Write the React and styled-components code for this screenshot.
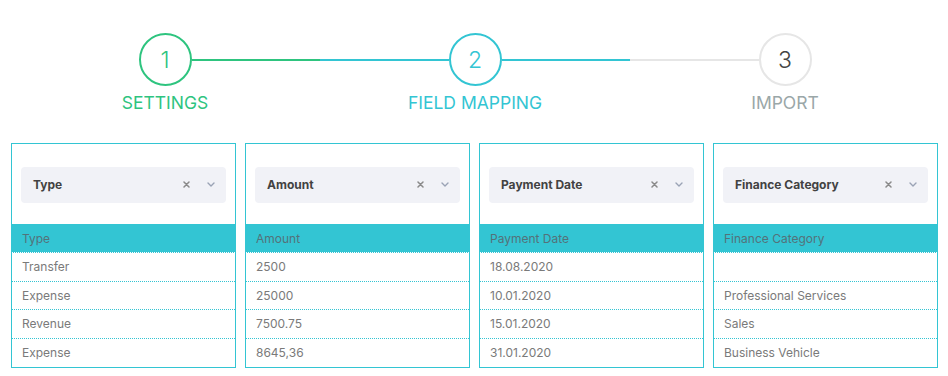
import React from 'react'
import styled, { createGlobalStyle } from 'styled-components'

const GREEN = '#2ec47f'
const TEAL = '#33c5d3'
const GREY_LINE = '#e6e6e6'

const GlobalStyle = createGlobalStyle`
  * { box-sizing: border-box; }
  body {
    margin: 0;
    background: #fff;
    font-family: Inter, "Noto Sans", sans-serif;
  }
`;

const Page = styled.div`
  width: 948px;
  height: 376px;
  overflow: hidden;
  background: #fff;
`;

const Stepper = styled.div`
  display: flex;
  padding: 33px 8px 0 10px;
`;

const Step = styled.div`
  flex: 1;
  display: flex;
  flex-direction: column;
  align-items: center;
`;

const Track = styled.div`
  width: 100%;
  display: flex;
  align-items: center;
`;

const Half = styled.div`
  flex: 1;
  height: 2px;
  background: ${p => p.$color || 'transparent'};
`;

const Circle = styled.div`
  width: 53px;
  height: 53px;
  border-radius: 50%;
  border: 2px solid ${p => p.$color};
  display: flex;
  align-items: center;
  justify-content: center;
  font-size: 23px;
  font-weight: 300;
  color: ${p => p.$text};
`;

const Label = styled.div`
  margin-top: 7px;
  font-size: 17.5px;
  line-height: 20px;
  text-transform: uppercase;
  color: ${p => p.$color};
`;

const Cards = styled.div`
  display: grid;
  grid-template-columns: repeat(4, 1fr);
  gap: 9px;
  padding: 0 10px 0 11px;
  margin-top: 30px;
`;

const Card = styled.div`
  border: 1px solid ${TEAL};
  padding-top: 23px;
`;

const Select = styled.div`
  margin: 0 9px 21px 9px;
  height: 36px;
  border-radius: 4px;
  background: #f1f2f7;
  display: flex;
  align-items: center;
  padding: 0 11px 1px 12px;
  font-size: 12px;
  font-weight: 700;
  color: #424242;
`;

const SelectText = styled.span`
  flex: 1;
`;

const Icons = styled.span`
  display: flex;
  align-items: center;
  gap: 17px;
`;

const HeadCell = styled.div`
  height: 29px;
  background: ${TEAL};
  display: flex;
  align-items: center;
  padding: 1px 0 0 10px;
  font-size: 12px;
  color: #53727a;
  border-bottom: 1px dotted #ffffff;
`;

const Cell = styled.div`
  height: ${p => (p.$last ? '28px' : '28.5px')};
  display: flex;
  align-items: center;
  padding-left: 10px;
  font-size: 12px;
  color: #7a7a7a;
  border-bottom: ${p => (p.$last ? 'none' : `1px dotted ${TEAL}`)};
`;

const Clear = () => (
  <svg width="7" height="7" viewBox="0 0 7 7">
    <path d="M1 1 L6 6 M6 1 L1 6" stroke="#8a8a8a" strokeWidth="1.5" strokeLinecap="round" />
  </svg>
)

const Chevron = () => (
  <svg width="8" height="5" viewBox="0 0 8 5">
    <path d="M1 1 L4 4 L7 1" stroke="#9aa3b5" strokeWidth="1.4" fill="none" strokeLinecap="round" strokeLinejoin="round" />
  </svg>
)

const steps = [
  { n: 1, label: 'Settings', color: GREEN, text: GREEN, labelColor: GREEN, left: null, right: GREEN },
  { n: 2, label: 'Field Mapping', color: TEAL, text: TEAL, labelColor: TEAL, left: TEAL, right: TEAL },
  { n: 3, label: 'Import', color: GREY_LINE, text: '#444', labelColor: '#9aa7a8', left: GREY_LINE, right: null },
]

const columns = [
  { title: 'Type', rows: ['Transfer', 'Expense', 'Revenue', 'Expense'] },
  { title: 'Amount', rows: ['2500', '25000', '7500.75', '8645,36'] },
  { title: 'Payment Date', rows: ['18.08.2020', '10.01.2020', '15.01.2020', '31.01.2020'] },
  { title: 'Finance Category', rows: ['', 'Professional Services', 'Sales', 'Business Vehicle'] },
]

export default function App() {
  return (
    <Page>
      <GlobalStyle />
      <Stepper>
        {steps.map(s => (
          <Step key={s.n}>
            <Track>
              <Half $color={s.left} />
              <Circle $color={s.color} $text={s.text}>{s.n}</Circle>
              <Half $color={s.right} />
            </Track>
            <Label $color={s.labelColor}>{s.label}</Label>
          </Step>
        ))}
      </Stepper>
      <Cards>
        {columns.map(c => (
          <Card key={c.title}>
            <Select>
              <SelectText>{c.title}</SelectText>
              <Icons>
                <Clear />
                <Chevron />
              </Icons>
            </Select>
            <HeadCell>{c.title}</HeadCell>
            {c.rows.map((r, i) => (
              <Cell key={i} $last={i === c.rows.length - 1}>{r}</Cell>
            ))}
          </Card>
        ))}
      </Cards>
    </Page>
  )
}
